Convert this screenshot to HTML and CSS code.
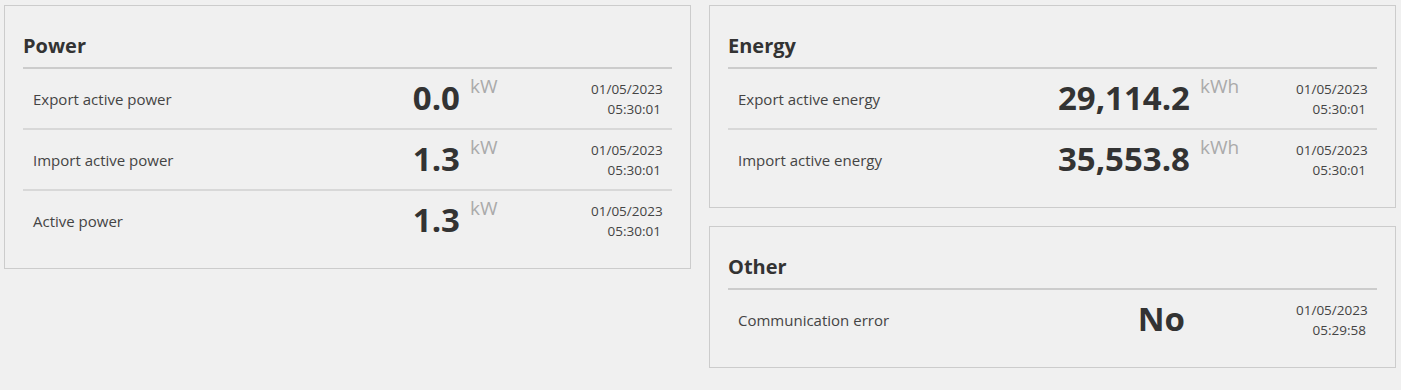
FILE: index.html
```html
<!DOCTYPE html>
<html lang="en">
  <head>
    <meta charset="UTF-8" />
    <meta name="viewport" content="width=device-width, initial-scale=1.0" />
    <title>Meter</title>
    <link rel="stylesheet" href="styles.css">
  </head>
  <body>
    <div class="dashboard">
      <div class="column">
        <section class="card card-power">
          <h2>Power</h2>
          <div class="row">
            <span class="label">Export active power</span>
            <span class="value">0.0</span>
            <span class="unit">kW</span>
            <span class="time">01/05/2023<br />05:30:01</span>
          </div>
          <div class="row">
            <span class="label">Import active power</span>
            <span class="value">1.3</span>
            <span class="unit">kW</span>
            <span class="time">01/05/2023<br />05:30:01</span>
          </div>
          <div class="row">
            <span class="label">Active power</span>
            <span class="value">1.3</span>
            <span class="unit">kW</span>
            <span class="time">01/05/2023<br />05:30:01</span>
          </div>
        </section>
      </div>

      <div class="column">
        <section class="card card-energy">
          <h2>Energy</h2>
          <div class="row">
            <span class="label">Export active energy</span>
            <span class="value">29,114.2</span>
            <span class="unit">kWh</span>
            <span class="time">01/05/2023<br />05:30:01</span>
          </div>
          <div class="row">
            <span class="label">Import active energy</span>
            <span class="value">35,553.8</span>
            <span class="unit">kWh</span>
            <span class="time">01/05/2023<br />05:30:01</span>
          </div>
        </section>

        <section class="card card-other">
          <h2>Other</h2>
          <div class="row">
            <span class="label">Communication error</span>
            <span class="value">No</span>
            <span class="unit"></span>
            <span class="time">01/05/2023<br />05:29:58</span>
          </div>
        </section>
      </div>
    </div>
  </body>
</html>
```

FILE: styles.css
```css
body {
  font-family: "Open Sans", "Liberation Sans", sans-serif;
  margin: 0;
  padding: 5px 5px 0 4px;
  background-color: #f0f0f0;
  color: #333;
}
.dashboard {
  display: grid;
  grid-template-columns: 1fr 1fr;
  column-gap: 18px;
  align-items: start;
}
.column {
  display: flex;
  flex-direction: column;
  gap: 18px;
}
.card {
  border: 1px solid #ccc;
  padding: 0 18px 18px 18px;
  --unit-width: 131px;
}
.card-energy {
  --unit-width: 106px;
}
.card-other {
  --unit-width: 111px;
}
.card h2 {
  font-size: 20px;
  font-weight: bold;
  line-height: 24px;
  margin: 28px 0 0 0;
  padding-bottom: 9px;
  border-bottom: 2px solid #ccc;
  color: #333;
}

/* one reading per row */
.row {
  display: grid;
  grid-template-columns: 1fr auto var(--unit-width) 81px;
  align-items: center;
  min-height: 59px;
  border-bottom: 2px solid #d8d8d8;
}
.row:last-child {
  border-bottom: none;
}
.label {
  padding-left: 10px;
  font-size: 15px;
  line-height: 20px;
  color: #444;
}
.value {
  font-size: 33px;
  font-weight: bold;
  line-height: 34px;
  margin-top: -2px;
  text-align: right;
  color: #333;
}
.unit {
  align-self: start;
  margin-top: 8px;
  padding-left: 10px;
  font-size: 19px;
  line-height: 19px;
  color: #aaa;
}
.time {
  padding-right: 11px;
  text-align: right;
  font-size: 13.5px;
  line-height: 20px;
  color: #444;
}
```
